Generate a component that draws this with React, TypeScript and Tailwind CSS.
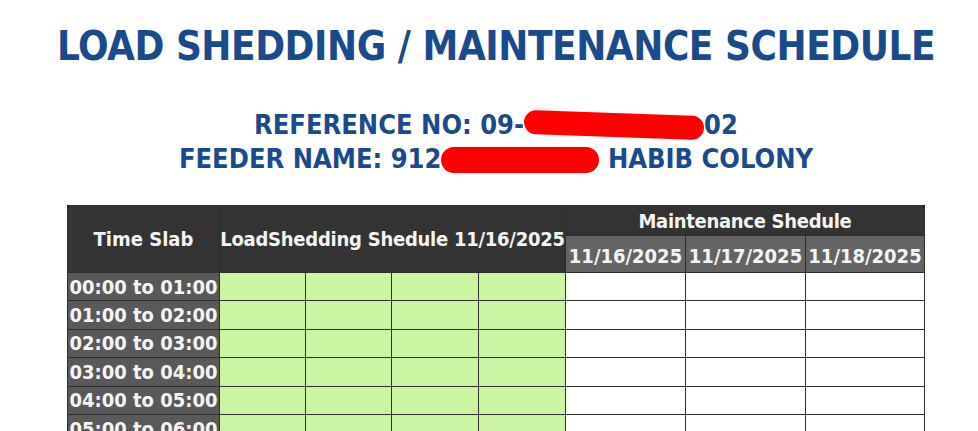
import React from 'react';

const slots = Array.from({ length: 24 }, (_, i) => {
  const pad = (n: number) => String(n).padStart(2, '0');
  return `${pad(i)}:00 to ${pad(i + 1)}:00`;
});

const maintenanceDates = ['11/16/2025', '11/17/2025', '11/18/2025'];

function Redacted({ width, className = '' }: { width: number; className?: string }) {
  return (
    <span
      className={`inline-block rounded-full bg-[#ff0000] align-middle ${className}`}
      style={{ width }}
    />
  );
}

export default function App() {
  return (
    <div className="min-h-screen bg-white pl-[14px] font-['DejaVu_Sans_Condensed','DejaVu_Sans',sans-serif] font-stretch-condensed">
      <div className="flex flex-col items-center">
        <h1 className="pt-[26px] text-[40px] font-bold leading-[40px] tracking-[-0.45px] text-[#1b4a8a]">
          LOAD SHEDDING / MAINTENANCE SCHEDULE
        </h1>

        <div className="mt-[42px] flex flex-col items-center text-[27px] font-bold leading-[34px] text-[#1b4a8a]">
          <p className="whitespace-nowrap">
            REFERENCE NO: 09-
            <Redacted width={180} className="-mt-[4px] h-[24px] rotate-[2deg]" />
            02
          </p>
          <p className="whitespace-nowrap">
            FEEDER NAME: 912
            <Redacted width={158} className="-mt-[2px] h-[26px]" />
            {' '}HABIB COLONY
          </p>
        </div>

        <div className="mt-[29px] grid w-[858px] grid-cols-[151px_85px_85px_86px_86px_119px_119px_118px] gap-px border border-[#2e2e2e] bg-[#2e2e2e] text-[20px] font-bold text-[#f4f4f4]">
          <div className="row-span-2 flex items-center justify-center bg-[#333333]">Time Slab</div>
          <div className="col-span-4 row-span-2 flex items-center justify-center whitespace-nowrap bg-[#333333] tracking-[-0.25px]">
            LoadShedding Shedule 11/16/2025
          </div>
          <div className="col-span-3 flex h-[29px] items-center justify-center bg-[#333333] tracking-[-0.3px]">
            Maintenance Shedule
          </div>
          {maintenanceDates.map((d) => (
            <div key={d} className="flex h-[36px] items-center justify-center bg-[#646464] pt-[3px]">
              {d}
            </div>
          ))}

          {slots.map((slot) => (
            <React.Fragment key={slot}>
              <div className="flex h-[27.4px] items-center justify-center whitespace-nowrap bg-[#595959]">
                {slot}
              </div>
              <div className="bg-[#ccf5a3]" />
              <div className="bg-[#ccf5a3]" />
              <div className="bg-[#ccf5a3]" />
              <div className="bg-[#ccf5a3]" />
              <div className="bg-white" />
              <div className="bg-white" />
              <div className="bg-white" />
            </React.Fragment>
          ))}
        </div>
      </div>
    </div>
  );
}
